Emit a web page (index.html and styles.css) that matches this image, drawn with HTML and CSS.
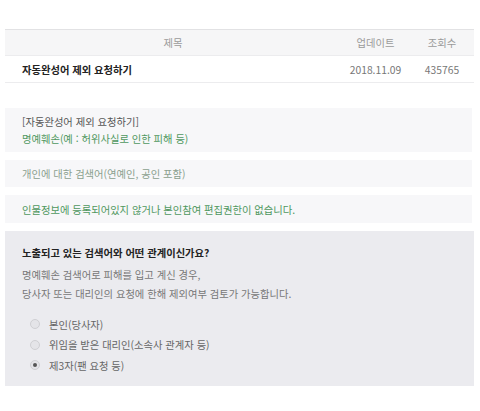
FILE: index.html
```html
<!DOCTYPE html>
<html lang="ko">
<head>
<meta charset="utf-8">
<link rel="stylesheet" href="styles.css">
</head>
<body>
<div class="page">
  <div class="table">
    <div class="row head">
      <div class="c-title">제목</div>
      <div class="c-date">업데이트</div>
      <div class="c-count">조회수</div>
    </div>
    <div class="row item">
      <div class="c-title strong">자동완성어 제외 요청하기</div>
      <div class="c-date">2018.11.09</div>
      <div class="c-count">435765</div>
    </div>
  </div>

  <div class="boxes">
    <div class="box">
      <div class="dark">[자동완성어 제외 요청하기]</div>
      <div class="green">명예훼손(예 : 허위사실로 인한 피해 등)</div>
    </div>
    <div class="box">
      <div class="pale">개인에 대한 검색어(연예인, 공인 포함)</div>
    </div>
    <div class="box">
      <div class="green">인물정보에 등록되어있지 않거나 본인참여 편집권한이 없습니다.</div>
    </div>
  </div>

  <div class="panel">
    <div class="q">노출되고 있는 검색어와 어떤 관계이신가요?</div>
    <div class="desc">명예훼손 검색어로 피해를 입고 계신 경우,<br>당사자 또는 대리인의 요청에 한해 제외여부 검토가 가능합니다.</div>
    <ul class="opts">
      <li><span class="radio"></span>본인(당사자)</li>
      <li><span class="radio"></span>위임을 받은 대리인(소속사 관계자 등)</li>
      <li><span class="radio on"></span>제3자(팬 요청 등)</li>
    </ul>
  </div>
</div>
</body>
</html>
```

FILE: styles.css
```css
* { box-sizing: border-box; }
html, body { margin: 0; padding: 0; background: #fff; }
body {
  font-family: "Noto Sans CJK KR", "Noto Sans", sans-serif;
  font-size: 10.3px;
  color: #555;
}
.page { padding: 29px 6px 0 5px; }

.table { width: 469px; }
.row {
  display: grid;
  grid-template-columns: 1fr 69px 64px;
  align-items: center;
  height: 27px;
  line-height: 17px;
}
.head {
  background: #f6f6f7;
  border-top: 1px solid #e2e2e4;
  border-bottom: 1px solid #ececee;
  color: #9a9a9a;
}
.head .c-title { text-align: center; }
.item { border-bottom: 1px solid #ececee; color: #777; }
.c-date, .c-count { text-align: center; }
.c-title.strong { padding-left: 17px; font-weight: bold; color: #222; }

.boxes {
  margin-top: 25px;
  width: 467px;
  display: flex;
  flex-direction: column;
  gap: 8px;
}
.box {
  background: #f7f7f9;
  padding: 5px 17px;
  line-height: 17px;
}
.box:last-child { padding-top: 6px; }
.dark { color: #555; }
.green { color: #4f9860; }
.pale { color: #8aa08e; }

.panel {
  margin-top: 8px;
  width: 469px;
  background: #ebebef;
  padding: 13px 17px 10px;
}
.q { font-weight: bold; color: #222; line-height: 17px; }
.desc { margin-top: 4px; line-height: 19px; color: #777; }
.opts { list-style: none; margin: 11px 0 0; padding: 0 0 0 8px; }
.opts li {
  display: flex;
  align-items: center;
  gap: 9px;
  height: 20.5px;
  color: #666;
}
.radio {
  width: 10px;
  height: 10px;
  border-radius: 50%;
  border: 1px solid #cfcfd3;
  background: #e4e4e8;
  position: relative;
  flex: none;
}
.radio.on::after {
  content: "";
  position: absolute;
  left: 2px; top: 2px;
  width: 4px; height: 4px;
  border-radius: 50%;
  background: #555;
}
```
